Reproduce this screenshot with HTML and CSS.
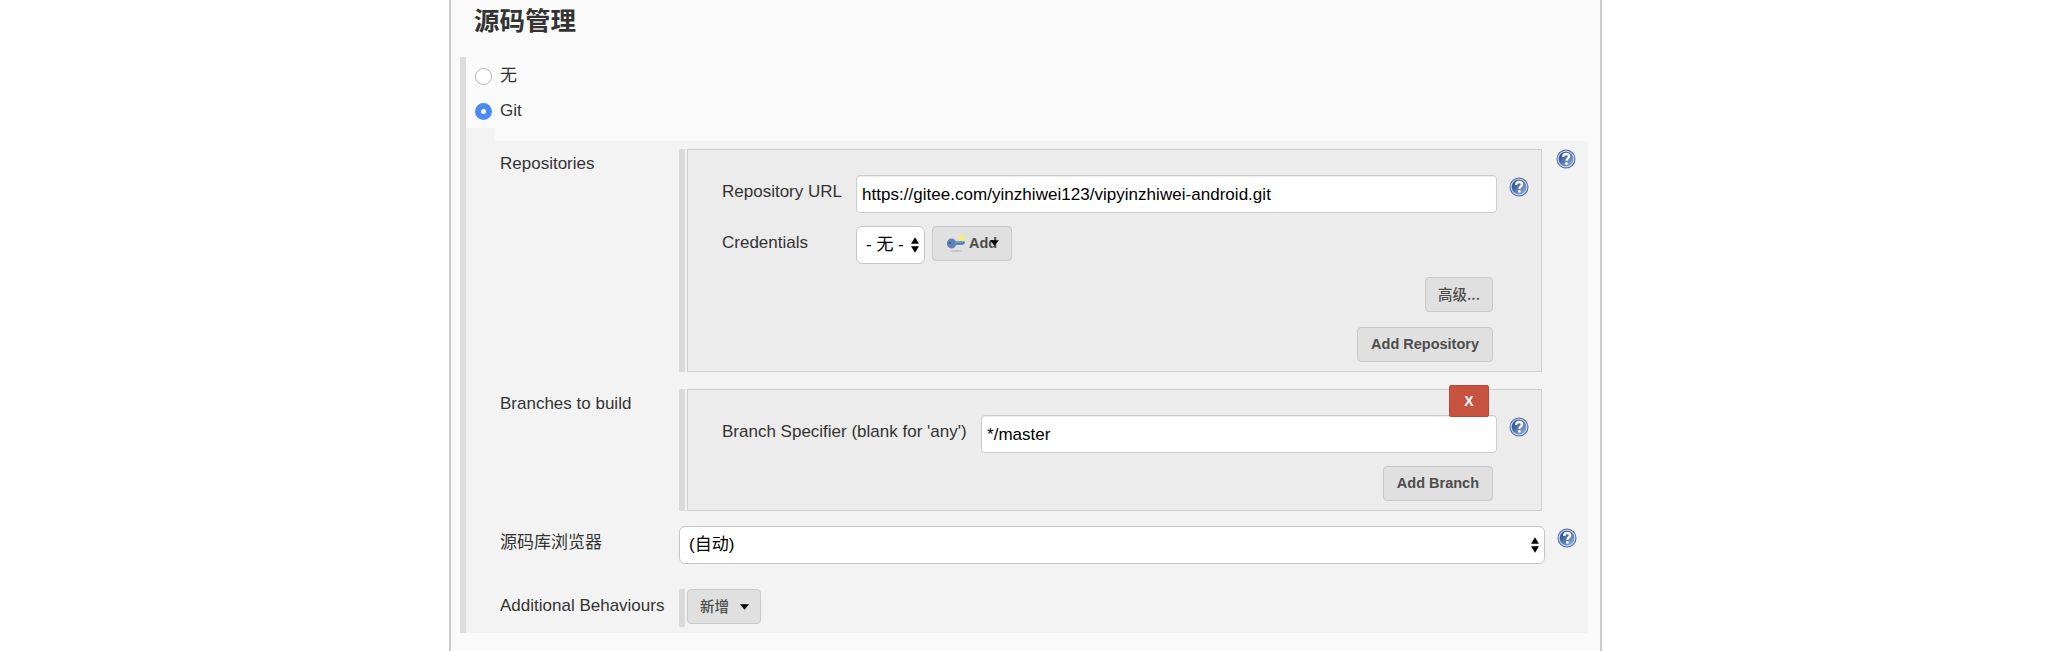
FILE: index.html
```
<!DOCTYPE html>
<html lang="zh-CN">
<head>
<meta charset="utf-8">
<title>源码管理</title>
<link rel="stylesheet" href="styles.css">
</head>
<body>
<svg class="defs" width="0" height="0">
  <defs>
    <linearGradient id="disc" x1="0" y1="0" x2="1" y2="1">
      <stop offset="0.1" stop-color="#1f4489"/>
      <stop offset="0.85" stop-color="#8aa6d2"/>
    </linearGradient>
    <symbol id="help" viewBox="0 0 20 20">
      <circle cx="10" cy="10" r="9.5" fill="#4a6ba6"/>
      <circle cx="10" cy="10" r="7.9" fill="url(#disc)" stroke="#c3d0e6" stroke-width="1.3"/>
      <path d="M7.2 7.9C7.2 5.9 8.4 5 10.1 5C11.8 5 13 6 13 7.5C13 9.4 10.5 9.5 10.5 11.7" fill="none" stroke="#fff" stroke-width="2.3"/>
      <circle cx="10.4" cy="14.4" r="1.4" fill="#fff"/>
    </symbol>
    <symbol id="updown" viewBox="0 0 8 16">
      <path d="M4 0.3L8 6.8H0ZM4 15.7L8 9.2H0Z" fill="#000"/>
    </symbol>
  </defs>
</svg>
<main class="config">
  <h2 class="title">源码管理</h2>
  <section class="scm">
    <label class="choice"><span class="radio"></span>无</label>
    <label class="choice choice-git"><span class="radio radio-on"></span><span class="git-text">Git</span></label>
    <div class="tab"></div>
    <div class="settings">
      <div class="row row-repos">
        <div class="label">Repositories</div>
        <div class="chunk">
          <div class="box">
            <div class="field">
              <span class="name name-repo">Repository URL</span>
              <input class="input" type="text" value="https://gitee.com/yinzhiwei123/vipyinzhiwei-android.git">
              <svg class="help"><use href="#help"/></svg>
            </div>
            <div class="field field-cred">
              <span class="name name-repo">Credentials</span>
              <div class="select select-small">- 无 -<svg class="updown"><use href="#updown"/></svg></div>
              <button class="btn btn-add">
                <svg class="key" viewBox="0 0 20 20">
                  <ellipse cx="10" cy="17" rx="6.5" ry="1.2" fill="#c8c8c8"/>
                  <circle cx="15.3" cy="4.3" r="3.7" fill="#f3ec86"/>
                  <path d="M9 7.3H18.5L19 9L17 10.7H9Z" fill="#4b74b5"/>
                  <ellipse cx="5.6" cy="9.5" rx="4.7" ry="5" fill="#5b82bd"/>
                  <circle cx="3.6" cy="9" r="1.3" fill="#3a61a3"/>
                  <path d="M9 8.3H17" stroke="#88a5d2"/>
                </svg>
                <span class="add-text">Add<svg class="caret caret-over" viewBox="0 0 8 5"><path d="M0 0H8L4 5Z"/></svg></span>
              </button>
            </div>
            <div class="actions actions-adv"><button class="btn btn-cjk">高级...</button></div>
            <div class="actions actions-repo"><button class="btn">Add Repository</button></div>
          </div>
        </div>
        <svg class="help help-row"><use href="#help"/></svg>
      </div>
      <div class="row row-branches">
        <div class="label">Branches to build</div>
        <div class="chunk">
          <div class="box">
            <button class="remove">X</button>
            <div class="field">
              <span class="name name-branch">Branch Specifier (blank for 'any')</span>
              <input class="input" type="text" value="*/master">
              <svg class="help"><use href="#help"/></svg>
            </div>
            <div class="actions actions-branch"><button class="btn">Add Branch</button></div>
          </div>
        </div>
      </div>
      <div class="row row-browser">
        <div class="label">源码库浏览器</div>
        <div class="select select-wide">(自动)<svg class="updown"><use href="#updown"/></svg></div>
        <svg class="help help-row"><use href="#help"/></svg>
      </div>
      <div class="row row-extra">
        <div class="label">Additional Behaviours</div>
        <div class="chunk">
          <button class="btn btn-cjk btn-new">新增<svg class="caret" viewBox="0 0 8 5"><path d="M0 0H8L4 5Z"/></svg></button>
        </div>
      </div>
    </div>
  </section>
</main>
</body>
</html>
```
FILE: styles.css
```
* { box-sizing: border-box; }

body {
  margin: 0;
  height: 651px;
  overflow: hidden;
  background: #fff;
  color: #333;
  font: 17px/20px "Liberation Sans", "Noto Sans CJK SC", sans-serif;
}

.defs { position: absolute; }

svg { display: block; flex: none; }

.config {
  width: 1153px;
  height: 651px;
  margin-left: 449px;
  padding-left: 9px;
  background: #fafafa;
  border: solid #ccc;
  border-width: 0 2px;
}

.title {
  height: 57px;
  margin: 0;
  padding: 5px 0 0 14px;
  font-size: 25.5px;
  line-height: 32px;
  font-weight: 700;
}

.scm {
  width: 1128px;
  height: 576px;
  border-left: 6px solid #ddd;
}

.choice {
  display: flex;
  align-items: center;
  gap: 8px;
  height: 36px;
  padding: 2px 0 0 9px;
}

.choice-git { height: 35px; padding-top: 2px; }
.git-text { padding-bottom: 2px; }

.radio {
  width: 17px;
  height: 17px;
  border: 1px solid #b4b4b4;
  border-radius: 50%;
  background: #fff;
}

.radio-on { border: 6px solid #4a8af4; }

.tab {
  width: 29px;
  height: 13px;
  background: #f3f3f3;
}

.settings {
  height: 492px;
  padding-top: 8px;
  background: #f3f3f3;
}

.row { display: flex; }

.label { width: 213px; padding-left: 34px; white-space: nowrap; }

.row .label { padding-top: 5px; }

.row-repos { height: 240px; }
.row-branches { height: 137px; }
.row-browser { height: 63px; }
.row-browser .label { padding-top: 7px; }
.row-extra { height: 38px; }
.row-extra .label { padding-top: 7px; }

.chunk {
  width: 863px;
  border-left: 6px solid #dadada;
  padding-left: 2px;
}

.row-repos .chunk { height: 223px; }
.row-branches .chunk { height: 122px; }

.box {
  position: relative;
  height: 100%;
  padding: 25px 12px 0 34px;
  background: #ececec;
  border: 1px solid #d0d0d0;
}

.field { display: flex; align-items: flex-start; }
.field-cred { margin-top: 13px; }

.name { padding-top: 7px; white-space: nowrap; }
.name-repo { width: 134px; }
.name-branch { width: 259px; }

.input {
  flex: 1;
  min-width: 0;
  height: 38px;
  padding: 1px 5px 0;
  border: 1px solid #ccc;
  border-radius: 4px;
  background: #fff;
  box-shadow: inset 0 1px 1px rgba(0, 0, 0, 0.08);
  color: #000;
  font: inherit;
  letter-spacing: 0.03px;
}

.help { width: 20px; height: 20px; }
.field .help { margin: 2px 0 0 12px; }
.row-repos > .help-row { margin-left: 14px; }
.row-browser > .help-row { margin: 2px 0 0 12px; }

.select {
  display: flex;
  align-items: center;
  justify-content: space-between;
  height: 38px;
  padding: 0 5px 0 9px;
  border: 1px solid #c6c6c6;
  border-radius: 6px;
  background: #fff;
  color: #000;
  white-space: nowrap;
}

.select-small { width: 69px; }
.select-wide { width: 866px; }

.updown { width: 8px; height: 16px; }

.btn {
  height: 35px;
  padding: 0 13px 2px;
  border: 1px solid #c9c9c9;
  border-radius: 4px;
  background: #e0e0e0;
  color: #4d4d4d;
  font: 700 14.5px/20px "Liberation Sans", "Noto Sans CJK SC", sans-serif;
  white-space: nowrap;
}

.btn-cjk {
  padding: 0 12px 2px;
  font-family: "Noto Sans CJK SC", sans-serif;
  font-weight: 500;
}

.btn-add {
  display: flex;
  align-items: center;
  width: 80px;
  margin-left: 7px;
  padding-left: 13px;
}

.key { width: 20px; height: 20px; margin: 2px 3px 0 0; }

.add-text { position: relative; }

.caret { width: 9px; height: 6px; fill: #000; }
.caret-over { position: absolute; right: -2px; top: 7px; }

.actions { display: flex; justify-content: flex-end; padding-right: 36px; }
.actions-adv { margin-top: 13px; }
.actions-repo { margin-top: 15px; }
.actions-branch { margin-top: 13px; }

.btn-new {
  display: flex;
  align-items: center;
  gap: 11px;
  width: 74px;
}

.btn-new .caret { margin-top: 3px; }

.remove {
  position: absolute;
  top: -5px;
  right: 52px;
  width: 40px;
  height: 32px;
  padding: 0;
  border: 1px solid #b8483a;
  border-radius: 2px;
  background: #c75240;
  color: #fff;
  font: 700 14px/20px "Liberation Sans", sans-serif;
}
```
